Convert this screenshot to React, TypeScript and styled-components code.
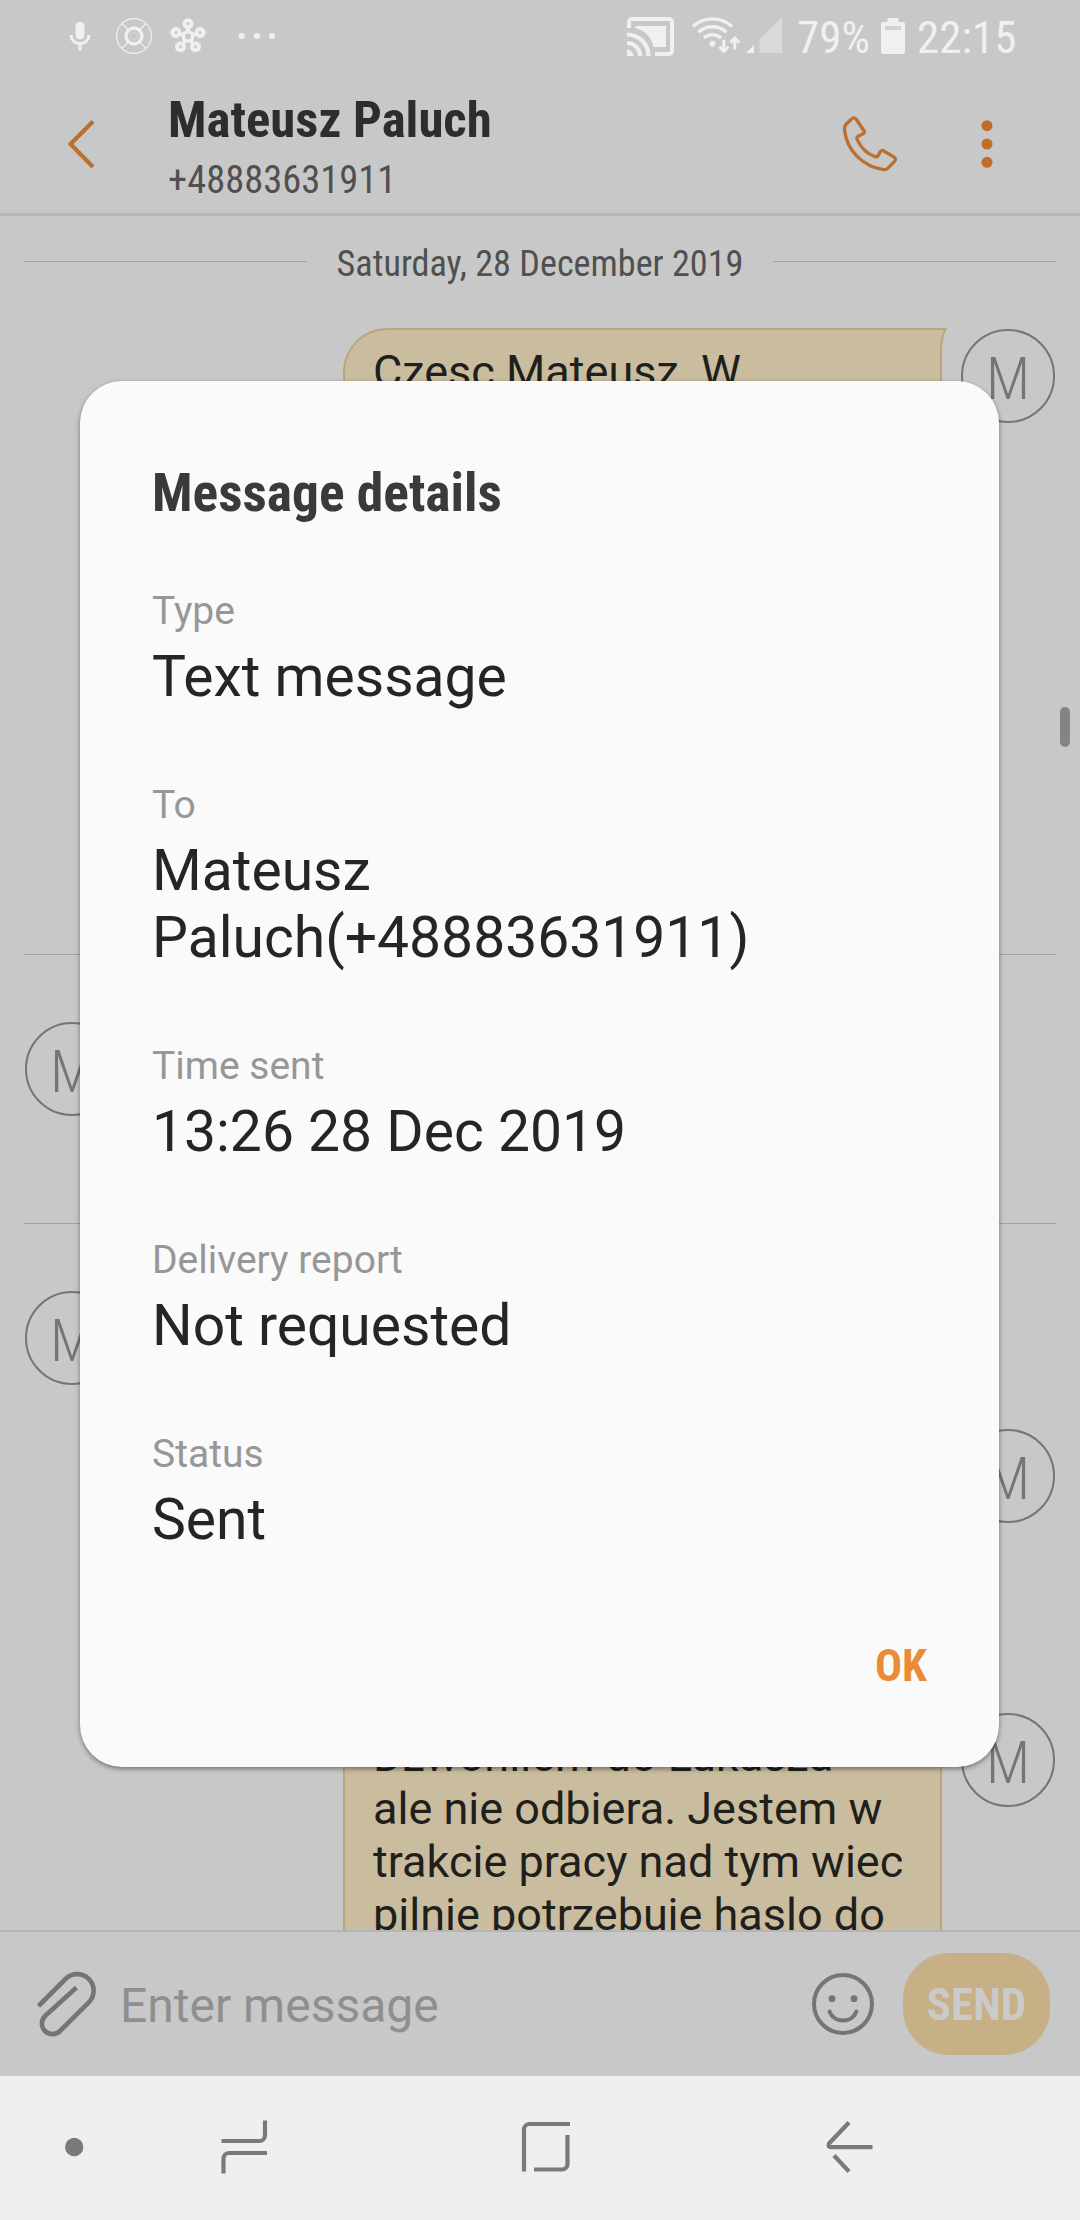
import React from "react";
import styled, { createGlobalStyle, css } from "styled-components";

const GlobalStyle = createGlobalStyle`
  * { box-sizing: border-box; }
  html, body { margin: 0; padding: 0; }
  body { font-family: Roboto, "Liberation Sans", sans-serif; background: #c8c8c8; }
`;

const condensed = css`
  font-family: "Roboto Condensed", Roboto, "Liberation Sans Narrow", sans-serif;
  font-stretch: 75%;
`;

const Screen = styled.div`
  position: relative;
  width: 1080px;
  height: 2220px;
  display: flex;
  flex-direction: column;
  background: #c8c8c8;
  overflow: hidden;
`;

const StatusBar = styled.div`
  display: flex;
  justify-content: space-between;
  flex: none;
  height: 72px;
  padding: 0 65px 0 66px;
  color: #f0f0f0;
`;

const StatusText = styled.span<{ $w: number; $ml: number }>`
  ${condensed}
  display: block;
  width: ${(p) => p.$w}px;
  margin-left: ${(p) => p.$ml}px;
  font-size: 45px;
  line-height: 75px;
  white-space: nowrap;
`;

const StatusGroup = styled.div`
  display: flex;
`;

const Glyph = styled.svg`
  display: block;
  flex: none;
`;

const Header = styled.header`
  display: flex;
  flex: none;
  height: 144px;
  border-bottom: 3px solid #b8b8b8;
  padding-left: 60px;
`;

const Contact = styled.div`
  width: 666px;
  margin-left: 68px;
  padding-top: 18px;
`;

const ContactName = styled.div`
  ${condensed}
  font-size: 50.8px;
  line-height: 60px;
  font-weight: 700;
  color: #2d2d2d;
  white-space: nowrap;
`;

const ContactNumber = styled.div`
  ${condensed}
  margin-top: 7px;
  font-size: 38.5px;
  line-height: 46px;
  color: #505050;
`;

const Thread = styled.main`
  flex: none;
  height: 1714px;
  overflow: hidden;
`;

const DateRow = styled.div`
  display: flex;
  align-items: center;
  height: 45px;
  margin: 25px 24px 42px;
  gap: 30px;
`;

const Rule = styled.div`
  flex: 1;
  height: 1px;
  margin-bottom: 5px;
  background: #a4a4a4;
`;

const DateText = styled.div`
  ${condensed}
  font-size: 36.2px;
  line-height: 45px;
  color: #505050;
  white-space: nowrap;
`;

const Divider = styled.div`
  height: 1px;
  margin: 0 24px;
  background: #a4a4a4;
`;

const MessageRow = styled.div<{ $out?: boolean; $h: number }>`
  display: flex;
  justify-content: ${(p) => (p.$out ? "flex-end" : "flex-start")};
  align-items: flex-start;
  height: ${(p) => p.$h}px;
  margin-top: ${(p) => (p.$out ? 0 : 66)}px;
  padding: 0 25px;
`;

const Bubble = styled.div`
  position: relative;
  width: 599px;
  height: 100%;
  margin-right: 19px;
  padding: 15px 0 0 28px;
  border: 2px solid #b9a778;
  border-radius: 44px 0 0 44px;
  background: #cabc9e;
`;

const Tail = styled.svg`
  position: absolute;
  top: -2px;
  right: -8px;
`;

const Line = styled.div`
  font-size: 45px;
  line-height: 53px;
  color: #1f1f1c;
  white-space: pre;
`;

const AvatarCircle = styled.div`
  ${condensed}
  width: 94px;
  height: 94px;
  margin-top: 1px;
  border: 2px solid #757575;
  border-radius: 50%;
  font-size: 59px;
  font-weight: 300;
  line-height: 96px;
  text-align: center;
  color: #757575;
`;

const ScrollThumb = styled.div`
  position: absolute;
  left: 1060px;
  top: 707px;
  width: 10px;
  height: 40px;
  border-radius: 5px;
  background: #848484;
`;

const Composer = styled.div`
  display: flex;
  align-items: flex-start;
  flex: none;
  height: 146px;
  border-top: 2px solid #b5b5b5;
  padding: 21px 30px 0 30px;
`;

const ComposerHint = styled.div`
  width: 684px;
  margin-left: 20px;
  padding-top: 21px;
  font-size: 48px;
  line-height: 64px;
  color: #8f8f8f;
`;

const SendButton = styled.button`
  ${condensed}
  width: 147px;
  height: 102px;
  margin: 0 0 0 23px;
  padding: 2px 0 0;
  border: 0;
  border-radius: 46px;
  background: #c7b086;
  color: #cacaca;
  font-size: 45px;
  font-weight: 700;
  line-height: 100px;
`;

const NavBar = styled.nav`
  display: flex;
  flex: 1;
  background: #efefef;
`;

const Dialog = styled.section`
  position: absolute;
  left: 80px;
  top: 381px;
  width: 919px;
  height: 1386px;
  padding: 80px 72px 0 72px;
  border-radius: 42px;
  background: #fafafa;
  box-shadow: 0 2px 5px rgba(0, 0, 0, 0.42);
`;

const DialogTitle = styled.h1`
  ${condensed}
  margin: 0 0 63px;
  font-size: 53.5px;
  line-height: 64px;
  font-weight: 700;
  color: #3a3a3a;
`;

const Field = styled.div`
  margin-bottom: 72px;
`;

const FieldLabel = styled.div`
  font-size: 39px;
  line-height: 46px;
  color: #979797;
`;

const FieldValue = styled.div`
  margin-top: 9px;
  font-size: 57px;
  line-height: 67px;
  color: #252525;
`;

const DialogActions = styled.div`
  display: flex;
  justify-content: flex-end;
  padding-top: 11px;
`;

const OkButton = styled.button`
  ${condensed}
  padding: 0;
  border: 0;
  background: none;
  font-size: 45px;
  line-height: 60px;
  font-weight: 700;
  color: #ea8c35;
`;

const Avatar = () => <AvatarCircle>M</AvatarCircle>;

const fields: [string, string][] = [
  ["Type", "Text message"],
  ["To", "Mateusz Paluch(+48883631911)"],
  ["Time sent", "13:26 28 Dec 2019"],
  ["Delivery report", "Not requested"],
  ["Status", "Sent"],
];

const petals = [0, 72, 144, 216, 288];

const LeftStatusIcons = () => (
  <Glyph width="220" height="72" viewBox="66 0 220 72" fill="none" stroke="#f0f0f0">
    <rect x="75.5" y="22" width="9" height="17.5" rx="4.5" fill="#f0f0f0" stroke="none" />
    <path d="M71 35a9 8.700 0 0 0 18 0M80 44v7" strokeWidth="3" />
    <circle cx="134" cy="36" r="17.400" strokeWidth="1.200" />
    <circle cx="134" cy="36" r="8" strokeWidth="3.400" />
    <circle cx="134" cy="36" r="4" strokeWidth="0.800" strokeDasharray="3 1.500" opacity="0.700" />
    <path d="M122 23.500l6 6M146 23.500l-6 6M122 48.500l6-6M146 48.500l-6-6" strokeWidth="1.200" />
    <circle cx="188" cy="36.500" r="4.600" strokeWidth="3.400" />
    {petals.map((a) => (
      <g key={a} transform={`rotate(${a} 188 36.500)`}>
        <circle cx="188" cy="23.700" r="3.500" strokeWidth="3.900" />
        <path d="M188 28v4" strokeWidth="4" />
      </g>
    ))}
    <g fill="#f0f0f0" stroke="none">
      <circle cx="241.700" cy="36" r="3.100" />
      <circle cx="257" cy="36" r="3.100" />
      <circle cx="272" cy="36" r="3.100" />
    </g>
  </Glyph>
);

const RightStatusIcons = () => (
  <Glyph width="160" height="72" viewBox="626 0 160 72" fill="none" stroke="#f0f0f0">
    <path d="M629 28v-6a3 3 0 0 1 3-3h37a3 3 0 0 1 3 3v29a3 3 0 0 1-3 3h-14" strokeWidth="4" />
    <path d="M635.500 26h30.500v21h-12.500c-2-9.500-8-16.500-18-19z" fill="#f0f0f0" stroke="none" />
    <path d="M627 34.500a21.500 21.500 0 0 1 21.500 21.500M627 43a13 13 0 0 1 13 13" strokeWidth="4.200" />
    <path d="M627 49.500a6.500 6.500 0 0 1 6.500 6.500h-6.500z" fill="#f0f0f0" stroke="none" />
    <path d="M693 26.500a28.500 28.500 0 0 1 39 0M698.500 32.300a20.500 20.500 0 0 1 28 0M704 38a12.500 12.500 0 0 1 17 0" strokeWidth="3.300" />
    <circle cx="712.500" cy="43.700" r="2.900" fill="#f0f0f0" stroke="none" />
    <path d="M723.800 40v11M719.300 46.800l4.500 4.500 4.500-4.500M734.800 49.500v-11M730.300 42.700l4.500-4.500 4.500 4.500" strokeWidth="3" />
    <path d="M754 45v8h-8z" fill="#f0f0f0" stroke="none" />
    <path d="M782 17v36h-22.500v-13.500z" fill="#d9d9d9" stroke="none" />
  </Glyph>
);

export default function App() {
  return (
    <>
      <GlobalStyle />
      <Screen>
        <StatusBar>
          <LeftStatusIcons />
          <StatusGroup>
            <RightStatusIcons />
            <StatusText $w={83} $ml={11}>79%</StatusText>
            <Glyph width="26" height="72" viewBox="879 0 26 72">
              <path d="M882 22h4.500v-4h11v4h4.500a2 2 0 0 1 2 2v28a2 2 0 0 1-2 2h-20a2 2 0 0 1-2-2v-28a2 2 0 0 1 2-2z" fill="#f0f0f0" />
              <path d="M884 26h16v4h-16z" fill="#d2d2d2" />
            </Glyph>
            <StatusText $w={98} $ml={11}>22:15</StatusText>
          </StatusGroup>
        </StatusBar>

        <Header>
          <Glyph width="40" height="141" viewBox="60 72 40 141" fill="none">
            <path d="M93 121.500L70.500 144L93 167" stroke="#b97031" strokeWidth="4.200" />
          </Glyph>
          <Contact>
            <ContactName>Mateusz Paluch</ContactName>
            <ContactNumber>+48883631911</ContactNumber>
          </Contact>
          <Glyph width="170" height="141" viewBox="834 72 170 141" fill="none">
            <path
              d="M845.800 124.500L851.500 119q2.700-2.500 4.900.500L863.800 130.500q1.300 2.400-1 3.500l-4.300 2q-2.300 1.300-1.300 3.600c4 8.500 10.500 14.500 17.800 17q2.600.900 3.500-1.500l1.500-3q1.300-2.500 4-1L894 157q2.600 2 .400 4.600l-6.400 6.500q-1.800 1.800-4.500 1.500c-21-3-37-19.500-39-40q-.400-3 1.300-5.100z"
              stroke="#b97031"
              strokeWidth="3.400"
              strokeLinejoin="round"
            />
            <circle cx="987" cy="125.700" r="5.500" fill="#bd6f2a" />
            <circle cx="987" cy="144" r="5.500" fill="#bd6f2a" />
            <circle cx="987" cy="162.300" r="5.500" fill="#bd6f2a" />
          </Glyph>
        </Header>

        <Thread>
          <DateRow>
            <Rule />
            <DateText>Saturday, 28 December 2019</DateText>
            <Rule />
          </DateRow>
          <MessageRow $out $h={626}>
            <Bubble>
              <Tail width="10" height="60" viewBox="0 0 10 60">
                <path d="M0 1H7Q2 9 2 26V60H0z" fill="#cabc9e" />
                <path d="M0 1H7.500Q3 9 3 26V60" fill="none" stroke="#b9a778" strokeWidth="2" />
              </Tail>
              <Line>Czesc Mateusz  W</Line>
            </Bubble>
            <Avatar />
          </MessageRow>
          <Divider />
          <MessageRow $h={202}>
            <Avatar />
          </MessageRow>
          <Divider />
          <MessageRow $h={138}>
            <Avatar />
          </MessageRow>
          <MessageRow $out $h={284}>
            <Avatar />
          </MessageRow>
          <MessageRow $out $h={260}>
            <Bubble>
              <Line>Dzwonilem do Lukasza</Line>
              <Line>ale nie odbiera. Jestem w</Line>
              <Line>trakcie pracy nad tym wiec</Line>
              <Line>pilnie potrzebuje haslo do</Line>
            </Bubble>
            <Avatar />
          </MessageRow>
        </Thread>

        <Composer>
          <Glyph width="70" height="100" viewBox="30 1953 70 100" fill="none" stroke="#757575" strokeWidth="4.600">
            <path d="M38.500 2006L65.500 1979a16.400 16.400 0 0 1 23.300 23.300L60 2031a10.500 10.500 0 0 1-15-15L76.500 1987.500" />
          </Glyph>
          <ComposerHint>Enter message</ComposerHint>
          <Glyph width="76" height="102" viewBox="804 1953 76 102" fill="none" stroke="#757575">
            <circle cx="843" cy="2004" r="29" strokeWidth="4" />
            <path d="M829.500 2011.500c4.500 12 22.500 12 27 0" strokeWidth="4" strokeLinecap="round" />
            <circle cx="832" cy="1998.700" r="3.400" fill="#757575" stroke="none" />
            <circle cx="854" cy="1998.700" r="3.400" fill="#757575" stroke="none" />
          </Glyph>
          <SendButton>SEND</SendButton>
        </Composer>

        <NavBar>
          <Glyph width="1080" height="144" viewBox="0 2076 1080 144" fill="none" stroke="#7a7a7a" strokeWidth="4.200">
            <circle cx="74.200" cy="2147" r="9.200" fill="#7a7a7a" stroke="none" />
            <path d="M221.500 2141H259.500a5.500 5.500 0 0 0 5.500-5.500V2120.500M267 2153H229a5.500 5.500 0 0 0-5.500 5.500V2173.500" />
            <path d="M524 2171.500V2129.500a5.500 5.500 0 0 1 5.500-5.500H570M567.500 2135V2164a5.500 5.500 0 0 1-5.500 5.500H534" />
            <path d="M849 2122.500L829 2143.500q-1.500 3.500 2 3.700H872.500M834 2155.500L849 2171.500" />
          </Glyph>
        </NavBar>

        <ScrollThumb />

        <Dialog>
          <DialogTitle>Message details</DialogTitle>
          {fields.map(([label, value]) => (
            <Field key={label}>
              <FieldLabel>{label}</FieldLabel>
              <FieldValue>{value}</FieldValue>
            </Field>
          ))}
          <DialogActions>
            <OkButton>OK</OkButton>
          </DialogActions>
        </Dialog>
      </Screen>
    </>
  );
}
